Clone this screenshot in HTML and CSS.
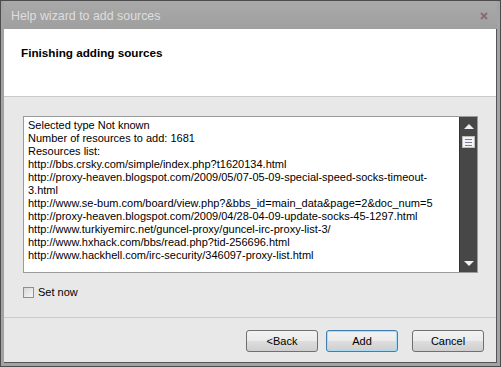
FILE: index.html
```html
<!DOCTYPE html>
<html lang="en">
<head>
    <meta charset="UTF-8">
    <title>Help wizard to add sources</title>
    <link rel="stylesheet" href="styles.css">
</head>
<body>
    <div class="window">
        <div class="titlebar">
            <span class="title">Help wizard to add sources</span>
            <svg class="close" width="8" height="8" viewBox="0 0 8 8">
                <path d="M1 1 L7 7 M7 1 L1 7" stroke="#8b6b73" stroke-width="2"/>
            </svg>
        </div>
        <div class="content">
            <div class="header">Finishing adding sources</div>
            <div class="body">
                <div class="textbox">
                    <div class="lines">
                        <div>Selected type Not known</div>
                        <div>Number of resources to add: 1681</div>
                        <div>Resources list:</div>
                        <div>http://bbs.crsky.com/simple/index.php?t1620134.html</div>
                        <div>http://proxy-heaven.blogspot.com/2009/05/07-05-09-special-speed-socks-timeout-</div>
                        <div>3.html</div>
                        <div>http://www.se-bum.com/board/view.php?&amp;bbs_id=main_data&amp;page=2&amp;doc_num=5</div>
                        <div>http://proxy-heaven.blogspot.com/2009/04/28-04-09-update-socks-45-1297.html</div>
                        <div>http://www.turkiyemirc.net/guncel-proxy/guncel-irc-proxy-list-3/</div>
                        <div>http://www.hxhack.com/bbs/read.php?tid-256696.html</div>
                        <div>http://www.hackhell.com/irc-security/346097-proxy-list.html</div>
                    </div>
                    <div class="scrollbar">
                        <span class="arrow up"></span>
                        <span class="thumb"><i></i><i></i><i></i></span>
                        <span class="track"></span>
                        <span class="arrow down"></span>
                    </div>
                </div>
                <label class="check"><span class="box"></span>Set now</label>
            </div>
            <div class="footer">
                <button class="btn">&lt;Back</button>
                <button class="btn default">Add</button>
                <button class="btn cancel">Cancel</button>
            </div>
        </div>
    </div>
</body>
</html>
```

FILE: styles.css
```css
html, body {
    margin: 0;
    padding: 0;
}
body {
    width: 501px;
    height: 367px;
    font-family: "Liberation Sans", Arial, sans-serif;
    font-size: 11px;
    color: #000;
}
.window {
    box-sizing: border-box;
    width: 501px;
    height: 367px;
    border: 1px solid #4c4c4c;
    background: #a3a3a3;
    padding: 0 3px 3px 3px;
    display: flex;
    flex-direction: column;
}
.titlebar {
    height: 28px;
    display: flex;
    align-items: center;
    justify-content: space-between;
    padding: 0 9px 0 7px;
    background: linear-gradient(#a9a9a9, #9f9f9f);
}
.title {
    color: #dedede;
    font-size: 12.4px;
    padding-top: 2px;
}
.close {
    margin-top: 1px;
}
.content {
    flex: 1;
    display: flex;
    flex-direction: column;
    background: #e8e8e8;
    border-right: 1px solid #555;
    border-bottom: 1px solid #555;
}
.header {
    height: 68px;
    box-sizing: border-box;
    background: #fff;
    border-bottom: 1px solid #c9c9c9;
    padding: 17px 0 0 17px;
    font-weight: bold;
    font-size: 11.7px;
}
.body {
    padding: 19px 18px 0 19px;
    flex: 1;
}
.textbox {
    height: 157px;
    box-sizing: border-box;
    background: #fff;
    border: 1px solid #9b9b9b;
    display: flex;
}
.lines {
    flex: 1;
    padding: 2px 0 0 4px;
    line-height: 13px;
    white-space: nowrap;
    overflow: hidden;
}
.scrollbar {
    width: 17px;
    background: #474747;
    border-left: 1px solid #333;
    display: flex;
    flex-direction: column;
    align-items: center;
}
.arrow {
    width: 0;
    height: 0;
    border-left: 5px solid transparent;
    border-right: 5px solid transparent;
}
.arrow.up {
    margin-top: 7px;
    border-bottom: 5px solid #f0f0f0;
}
.arrow.down {
    margin-bottom: 6px;
    border-top: 5px solid #f0f0f0;
}
.track {
    flex: 1;
}
.thumb {
    margin-top: 7px;
    width: 13px;
    height: 12px;
    box-sizing: border-box;
    background: #f4f4f4;
    border: 1px solid #bdbdbd;
    display: flex;
    flex-direction: column;
    justify-content: center;
    gap: 2px;
    padding: 0 2px;
}
.thumb i {
    display: block;
    height: 1px;
    background: #7b7c9a;
}
.check {
    display: flex;
    align-items: center;
    gap: 4px;
    margin-top: 13px;
}
.box {
    width: 11px;
    height: 11px;
    box-sizing: border-box;
    border: 1px solid #8e8e8e;
    background: linear-gradient(135deg, #d8d8d8, #f6f6f6);
}
.footer {
    height: 45px;
    box-sizing: border-box;
    border-top: 1px solid #cbcbcb;
    display: flex;
    justify-content: flex-end;
    align-items: flex-start;
    padding: 12px 12px 0 0;
    gap: 8px;
}
.btn {
    width: 72px;
    height: 22px;
    font-family: "Liberation Sans", Arial, sans-serif;
    font-size: 11px;
    color: #000;
    border: 1px solid #707070;
    border-radius: 3px;
    background: linear-gradient(#f2f2f2 0%, #ebebeb 50%, #dddddd 51%, #cfcfcf 100%);
    padding: 0;
}
.btn.default {
    border-color: #3c7fb1;
    box-shadow: inset 0 0 0 1px #a8dcf4;
}
.btn.cancel {
    margin-left: 6px;
}
```
